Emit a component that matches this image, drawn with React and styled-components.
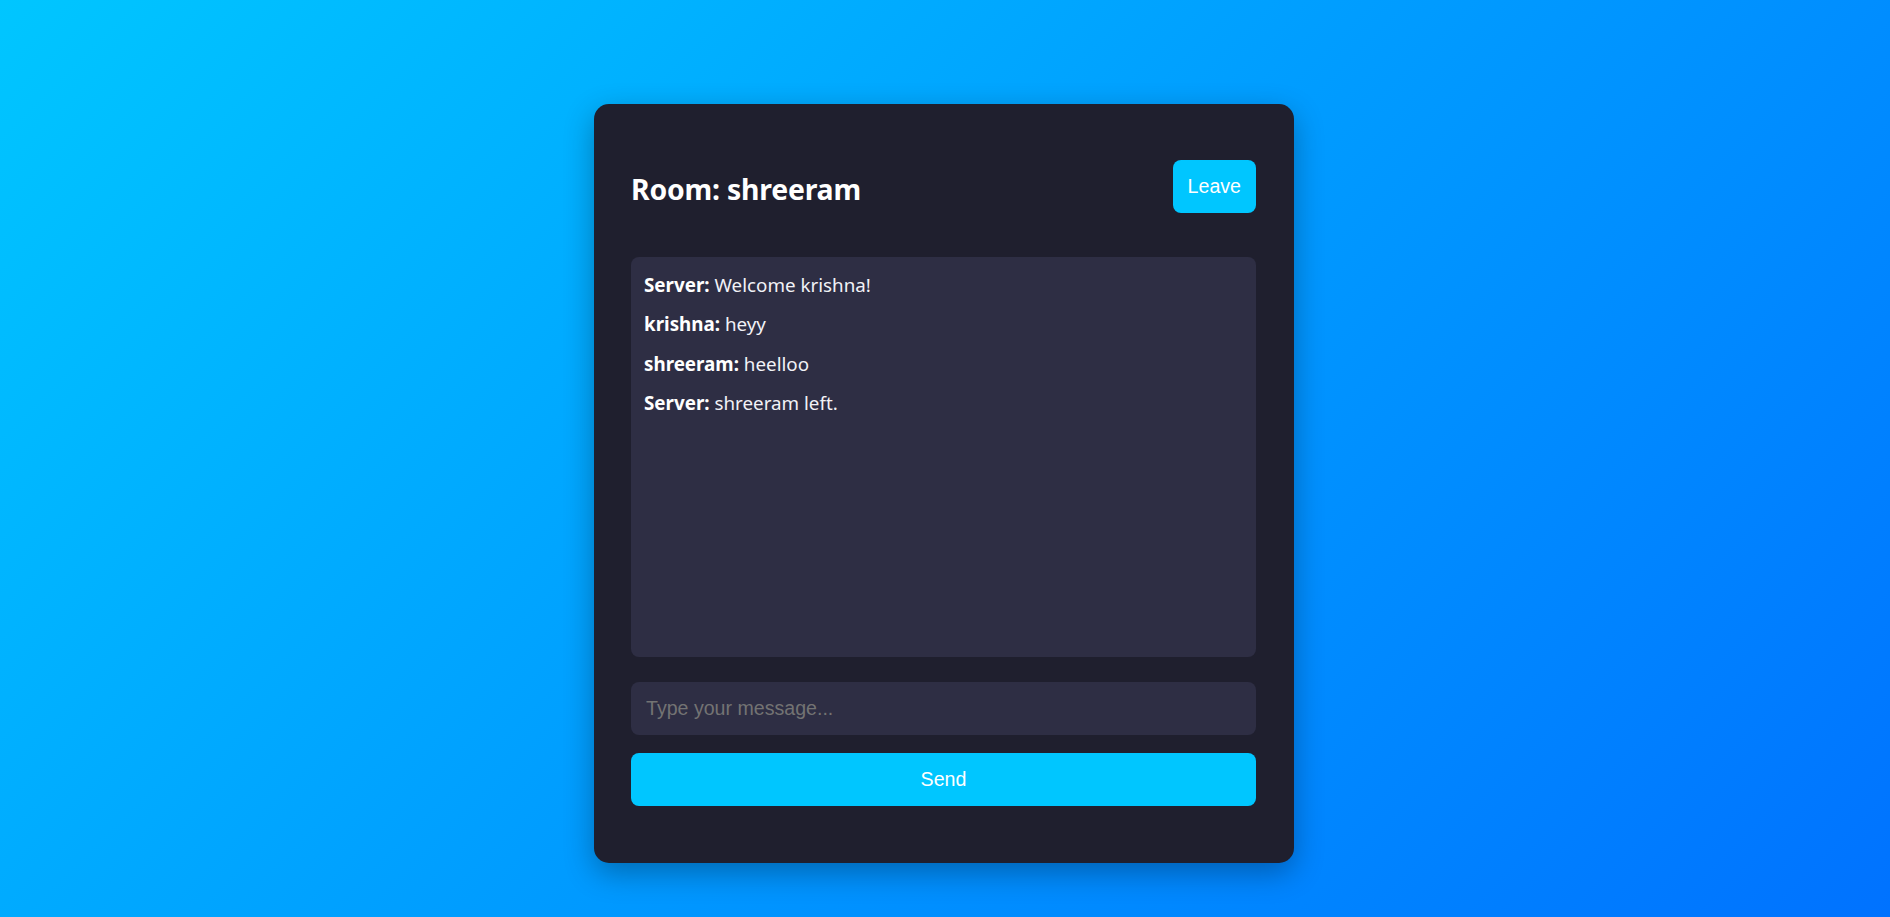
import React, { useState } from 'react'
import styled, { createGlobalStyle } from 'styled-components'

const GlobalStyle = createGlobalStyle`
  html, body {
    margin: 0;
    padding: 0;
  }
  body {
    min-height: 100vh;
    background: linear-gradient(135deg, #00c6ff, #0072ff);
    font-family: "Noto Sans", "Open Sans", sans-serif;
  }
`

const initialMessages = [
  { user: 'Server', text: 'Welcome krishna!' },
  { user: 'krishna', text: 'heyy' },
  { user: 'shreeram', text: 'heelloo' },
  { user: 'Server', text: 'shreeram left.' },
]

export default function App() {
  const [messages, setMessages] = useState(initialMessages)
  const [value, setValue] = useState('')

  const send = () => {
    if (!value.trim()) return
    setMessages(m => [...m, { user: 'shreeram', text: value }])
    setValue('')
  }

  return (
    <>
      <GlobalStyle />
      <Page>
        <Card>
          <Header>
            <Title>Room: shreeram</Title>
            <LeaveButton>Leave</LeaveButton>
          </Header>
          <ChatBox>
            {messages.map((m, i) => (
              <Message key={i}>
                <strong>{m.user}:</strong> {m.text}
              </Message>
            ))}
          </ChatBox>
          <MessageInput
            placeholder="Type your message..."
            value={value}
            onChange={e => setValue(e.target.value)}
            onKeyDown={e => e.key === 'Enter' && send()}
          />
          <SendButton onClick={send}>Send</SendButton>
        </Card>
      </Page>
    </>
  )
}

const Page = styled.div`
  display: flex;
  justify-content: center;
  padding: 104px 2px 0 0;
`

const Card = styled.div`
  box-sizing: border-box;
  width: 700px;
  padding: 56px 38px 57px 37px;
  background: #1f1f2e;
  border-radius: 15px;
  box-shadow: 0 10px 30px rgba(0, 0, 0, 0.3);
  display: flex;
  flex-direction: column;
`

const Header = styled.div`
  display: flex;
  justify-content: space-between;
  align-items: center;
  margin-bottom: 44px;
`

const Title = styled.h2`
  margin: 5px 0 0;
  color: #fff;
  font-size: 28.4px;
  font-weight: 700;
  letter-spacing: -0.2px;
`

const buttonBase = `
  border: none;
  border-radius: 8px;
  background: #00c6ff;
  color: #fff;
  font-family: "Liberation Sans", Arial, sans-serif;
  font-size: 19.6px;
  line-height: 23px;
  cursor: pointer;
`

const LeaveButton = styled.button`
  ${buttonBase}
  padding: 15px 15px;
`

const ChatBox = styled.div`
  box-sizing: border-box;
  height: 400px;
  overflow-y: auto;
  padding: 16px 13px;
  background: #2e2e44;
  border-radius: 8px;
  margin-bottom: 25px;
`

const Message = styled.p`
  margin: 0 0 15px;
  color: #f2f2f7;
  font-size: 18.8px;
  line-height: 24.4px;

  strong {
    color: #fff;
    font-weight: 700;
  }
`

const MessageInput = styled.input`
  box-sizing: border-box;
  width: 100%;
  height: 53px;
  padding: 0 15px;
  border: none;
  outline: none;
  border-radius: 8px;
  background: #2e2e44;
  color: #fff;
  font-family: "Liberation Sans", Arial, sans-serif;
  font-size: 19.6px;
  margin-bottom: 18px;

  &::placeholder {
    color: #737373;
  }
`

const SendButton = styled.button`
  ${buttonBase}
  width: 100%;
  height: 53px;
`
